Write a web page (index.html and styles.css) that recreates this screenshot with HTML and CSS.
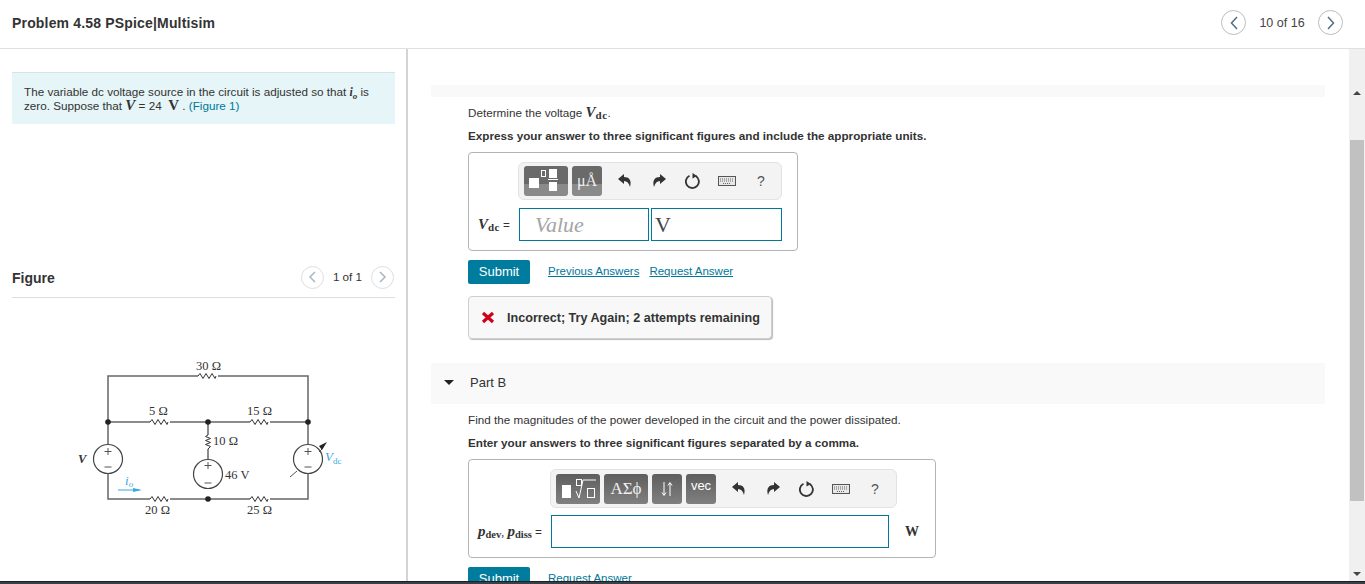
FILE: index.html
```html
<!DOCTYPE html>
<html lang="en">
<head>
<meta charset="utf-8">
<title>Problem 4.58 PSpice|Multisim</title>
<link rel="stylesheet" href="styles.css">
</head>
<body>
<div class="app">
  <header class="top">
    <h1 class="title">Problem 4.58 PSpice|Multisim</h1>
    <nav class="pager">
      <span class="circle"><svg width="10" height="14" viewBox="0 0 10 14"><path d="M8 1 2.500 7 8 13" class="chev"/></svg></span>
      <span class="pager-text">10 of 16</span>
      <span class="circle"><svg width="10" height="14" viewBox="0 0 10 14"><path d="M2 1 7.500 7 2 13" class="chev"/></svg></span>
    </nav>
  </header>
  <main class="main">
    <section class="left">
      <div class="intro">The variable dc voltage source in the circuit is adjusted so that <i class="m">i<sub>o</sub></i> is zero. Suppose that <i class="m big">V</i> = 24 &nbsp;<span class="m big upright">V</span> . <a class="fig">(Figure 1)</a></div>
      <div class="fig-head">
        <strong>Figure</strong>
        <div class="mini-pager">
          <span class="circle small"><svg width="9" height="12" viewBox="0 0 9 12"><path d="M7 1 2 6 7 11" class="chev dim"/></svg></span>
          <span class="mini-text">1 of 1</span>
          <span class="circle small"><svg width="9" height="12" viewBox="0 0 9 12"><path d="M2 1 7 6 2 11" class="chev dim"/></svg></span>
        </div>
      </div>
      <svg class="circuit" width="290" height="180" viewBox="70 350 290 180">
        <g class="wire">
          <path d="M108 445V377H198M218 377H308V445M108 475V500H150M170 500H250M270 500H308V475M108 423H150M170 423H250M270 423H308M208 423V436M208 450V460"/>
        </g>
        <g class="res">
          <path d="M198 377l2 -2.500 3 5 3 -5 3 5 3 -5 3 5 1 -2.500"/>
          <path d="M150 423l2 -2.500 3 5 3 -5 3 5 3 -5 3 5 1 -2.500"/>
          <path d="M250 423l2 -2.500 3 5 3 -5 3 5 3 -5 3 5 1 -2.500"/>
          <path d="M150 500l2 -2.500 3 5 3 -5 3 5 3 -5 3 5 1 -2.500"/>
          <path d="M250 500l2 -2.500 3 5 3 -5 3 5 3 -5 3 5 1 -2.500"/>
          <path d="M208 436l-2.500 1.500 5 2 -5 2 5 2 -5 2 5 2 -2.500 2.500"/>
        </g>
        <g class="src">
          <circle cx="108" cy="460" r="14.500"/>
          <circle cx="208" cy="475" r="14.500"/>
          <circle cx="308" cy="460" r="14.500"/>
          <path d="M108 449v7M104.500 452.500h7M104.500 468h7M208 463v7M204.500 466.500h7M204.500 484h7M308 449v7M304.500 452.500h7M304.500 468h7"/>
          <path d="M290 478 297 472M319 453 322 450"/>
        </g>
        <path class="tip" d="M327 443 319 447 322 451Z"/>
        <circle class="dot" cx="108" cy="423" r="2.800"/>
        <circle class="dot" cx="208" cy="423" r="2.800"/>
        <circle class="dot" cx="308" cy="423" r="2.800"/>
        <circle class="dot" cx="208" cy="500" r="2.800"/>
        <path class="io" d="M118 491H139"/>
        <path class="io-tip" d="M133 489 142 491 133 493Z"/>
        <text class="lab" x="196" y="371">30 Ω</text>
        <text class="lab" x="149" y="416">5 Ω</text>
        <text class="lab" x="247" y="416">15 Ω</text>
        <text class="lab" x="213" y="446">10 Ω</text>
        <text class="lab" x="225" y="480">46 V</text>
        <text class="lab" x="145" y="515">20 Ω</text>
        <text class="lab" x="247" y="515">25 Ω</text>
        <text class="lab it" x="78" y="464">V</text>
        <text class="lab it blue" x="125" y="486">i<tspan class="sb" dy="2">o</tspan></text>
        <text class="lab it blue" x="325" y="462">V<tspan class="sb up" dy="3">dc</tspan></text>
      </svg>
    </section>
    <section class="right">
      <div class="strip"></div>
      <div class="part">
        <p class="p first">Determine the voltage <i class="m big">V</i><b class="m sub">dc</b>.</p>
        <p class="p b">Express your answer to three significant figures and include the appropriate units.</p>
        <div class="box box-a">
          <div class="toolbar t-a">
            <span class="btn w44"><svg width="44" height="30" viewBox="0 0 44 30"><rect x="5" y="12" width="10" height="10" fill="#fff"/><rect x="17.500" y="4.500" width="4" height="6" fill="none" stroke="#fff"/><rect x="25" y="3" width="8" height="9" fill="#fff"/><path d="M24 13.500h10" stroke="#fff"/><rect x="25" y="16" width="8" height="9" fill="#fff"/></svg></span>
            <span class="btn w30 serif">μÅ</span>
            <span class="tool"><svg width="16" height="16" viewBox="0 0 16 16"><path class="ic" d="M1 6 7 1V4C12 4 15 7 13 14 12 10 10 8 7 8V11Z"/></svg></span>
            <span class="tool"><svg width="16" height="16" viewBox="0 0 16 16"><path class="ic" d="M15 6 9 1V4C4 4 1 7 3 14 4 10 6 8 9 8V11Z"/></svg></span>
            <span class="tool"><svg width="16" height="16" viewBox="0 0 16 16"><path class="ring" d="M10.800 3A6.500 6.500 0 1 1 4.500 2.700"/><path class="ic" d="M7.500 0 12 3 7.500 5.500Z"/></svg></span>
            <span class="tool"><svg width="18" height="10" viewBox="0 0 18 10"><rect class="kb" x=".5" y=".5" width="17" height="9"/><path class="keys" d="M2 3h14M2 5h14M5 7.500h8"/></svg></span>
            <span class="tool q">?</span>
          </div>
          <div class="row-a">
            <span class="var"><i class="m big">V</i><b class="m sub">dc</b> =</span>
            <span class="input value">Value</span>
            <span class="input unit">V</span>
          </div>
        </div>
        <div class="actions">
          <a class="submit">Submit</a>
          <a class="link l1">Previous Answers</a>
          <a class="link">Request Answer</a>
        </div>
        <div class="feedback">
          <svg width="14" height="13" viewBox="0 0 14 13"><path d="M2 2 12 11M12 2 2 11" stroke="#d0021b" stroke-width="3.200"/></svg>
          <span>Incorrect; Try Again; 2 attempts remaining</span>
        </div>
      </div>
      <div class="part-head"><span class="tri"></span>Part B</div>
      <div class="part">
        <p class="p first">Find the magnitudes of the power developed in the circuit and the power dissipated.</p>
        <p class="p b">Enter your answers to three significant figures separated by a comma.</p>
        <div class="box box-b">
          <div class="toolbar t-b">
            <span class="btn w44"><svg width="44" height="30" viewBox="0 0 44 30"><rect x="6" y="11" width="9" height="13" fill="#fff"/><rect x="20.500" y="5.500" width="5" height="6" fill="none" stroke="#fff"/><path d="M20 17 23 24 27 6H40" fill="none" stroke="#fff"/><rect x="31.500" y="14.500" width="7" height="9" fill="none" stroke="#fff"/></svg></span>
            <span class="btn w44 serif greek">ΑΣϕ</span>
            <span class="btn w30"><svg width="14" height="16" viewBox="0 0 14 16"><path d="M4 1V14M2 11.500 4 14.500 6 11.500M10 15V2M8 4.500 10 1.500 12 4.500" fill="none" stroke="#fff"/></svg></span>
            <span class="btn w30 vec">vec</span>
            <span class="tool"><svg width="16" height="16" viewBox="0 0 16 16"><path class="ic" d="M1 6 7 1V4C12 4 15 7 13 14 12 10 10 8 7 8V11Z"/></svg></span>
            <span class="tool"><svg width="16" height="16" viewBox="0 0 16 16"><path class="ic" d="M15 6 9 1V4C4 4 1 7 3 14 4 10 6 8 9 8V11Z"/></svg></span>
            <span class="tool"><svg width="16" height="16" viewBox="0 0 16 16"><path class="ring" d="M10.800 3A6.500 6.500 0 1 1 4.500 2.700"/><path class="ic" d="M7.500 0 12 3 7.500 5.500Z"/></svg></span>
            <span class="tool"><svg width="18" height="10" viewBox="0 0 18 10"><rect class="kb" x=".5" y=".5" width="17" height="9"/><path class="keys" d="M2 3h14M2 5h14M5 7.500h8"/></svg></span>
            <span class="tool q">?</span>
          </div>
          <div class="row-b">
            <span class="var vb"><i class="m pv">p</i><b class="m sub">dev</b><span class="m">,</span> <i class="m pv">p</i><b class="m sub">diss</b> =</span>
            <span class="input wide"></span>
            <span class="w-unit">W</span>
          </div>
        </div>
        <div class="actions">
          <a class="submit">Submit</a>
          <a class="link l1b">Request Answer</a>
        </div>
      </div>
    </section>
    <div class="scroll">
      <span class="arr up-arr"></span>
      <span class="thumb"></span>
      <span class="arr down-arr"></span>
    </div>
  </main>
  <div class="bottom"></div>
</div>
</body>
</html>
```
FILE: styles.css
```css
* { box-sizing: border-box; }
html, body { margin: 0; height: 100%; overflow: hidden; background: #fff; }
body { font: 11.700px/14px "Liberation Sans", Arial, sans-serif; color: #333; }
.app { height: 584px; display: flex; flex-direction: column; }
.top { height: 49px; flex: none; display: flex; align-items: center; justify-content: space-between; padding: 0 22px 3px 12px; border-bottom: 1px solid #e0e0e0; }
.title { margin: 0; font-size: 14px; letter-spacing: .17px; font-weight: bold; color: #333; }
.pager { display: flex; align-items: center; }
.circle { width: 25px; height: 25px; border: 1px solid #bdbdbd; border-radius: 50%; display: flex; align-items: center; justify-content: center; }
.circle.small { width: 23px; height: 23px; border-color: #dedede; }
.pager-text { width: 72px; text-align: center; color: #444; font-size: 12.500px; }
.chev { fill: none; stroke: #4f6f86; stroke-width: 1.500; }
.chev.dim { stroke: #a9b6c0; }
.main { flex: 1; min-height: 0; display: flex; }
.left { width: 408px; flex: none; padding: 23px 11px 0 12px; border-right: 2px solid #d4d4d4; overflow: hidden; }
.intro { height: 52px; padding: 12px 12px 0; background: #e6f5f7; border-top: 1px solid #d8e2e4; }
.m { font-family: "Liberation Serif", serif; line-height: 0; }
.big { font-size: 15px; font-weight: bold; }
.upright { font-style: normal; }
.intro i.m { font-weight: bold; }
sub { font-size: 9px; line-height: 0; }
.fig { color: #00789b; }
.fig-head { height: 37px; margin-top: 137px; padding: 3px 0 5px; display: flex; align-items: center; justify-content: space-between; border-bottom: 1px solid #dedede; font-size: 14px; }
.fig-head strong { color: #333; }
.mini-pager { display: flex; align-items: center; margin: -2px 1px 0 0; }
.mini-text { width: 47px; text-align: center; font-size: 11.700px; }
.circuit { display: block; margin: 51px 0 0 58px; }
.wire path { fill: none; stroke: #666; stroke-width: 1.500; }
.res path { fill: none; stroke: #333; stroke-width: 1; }
.src circle { fill: #fff; stroke: #444; stroke-width: 1.200; }
.src path { fill: none; stroke: #555; stroke-width: 1; }
.tip { fill: #222; }
.dot { fill: #222; }
.io { stroke: #36a9e1; stroke-width: 1; }
.io-tip { fill: #36a9e1; }
.lab { font: 12.500px "Liberation Serif", serif; fill: #333; }
.lab.it { font-style: italic; font-weight: bold; }
.lab.blue { fill: #36a9e1; font-weight: normal; font-size: 13px; }
.sb { font-size: 9px; font-style: italic; }
.sb.up { font-style: normal; }
.right { flex: 1; min-width: 0; padding: 36px 24px 0 23px; overflow: hidden; }
.strip { height: 12px; background: #f9f9f9; }
.part { padding-left: 37px; }
.p { margin: 7px 0 0; line-height: 16px; }
.p.first { margin-top: 8px; }
.p.b { font-weight: bold; color: #333; }
.sub { font-size: 11px; letter-spacing: .4px; vertical-align: -2px; }
.vb .sub { font-size: 10.500px; letter-spacing: 0; }
.box { margin-top: 8px; border: 1px solid #b4b4b4; border-radius: 4px; height: 99px; padding-top: 9px; }
.box-a { width: 330px; }
.box-b { width: 468px; }
.toolbar { display: flex; align-items: center; background: #f3f3f3; border: 1px solid #e2e2e2; border-radius: 6px; padding-left: 5px; }
.t-a { width: 264px; height: 38px; margin-left: 49px; }
.t-b { width: 347px; height: 39px; margin-left: 81px; }
.btn { height: 30px; margin-right: 4px; border-radius: 3px; background: linear-gradient(#6a6a6a 0 60%, #8a8a8a 60%); color: #fff; display: flex; align-items: center; justify-content: center; flex: none; overflow: hidden; }
.t-b .btn { background: linear-gradient(#5e5e5e, #808080); }
.w44 { width: 44px; }
.w30 { width: 30px; }
.serif { font: 16px "Liberation Serif", serif; color: #f0f0f0; }
.greek { font-size: 17px; }
.vec { font-size: 13px; padding-bottom: 5px; }
.btn + .tool { margin-left: 2px; }
.tool { width: 34px; flex: none; display: flex; align-items: center; justify-content: center; }
.q { font-size: 14px; color: #555; }
.ic { fill: #333; }
.ring { fill: none; stroke: #333; stroke-width: 1.800; }
.kb { fill: #e8e8e8; stroke: #555; }
.keys { stroke: #666; stroke-dasharray: 1 1; fill: none; }
.row-a { display: flex; align-items: center; margin-top: 8px; height: 33px; padding-left: 9px; }
.row-b { display: flex; align-items: center; margin-top: 7px; height: 33px; padding-left: 9px; }
.var { width: 41px; flex: none; white-space: nowrap; }
.vb { width: 73px; }
.pv { font-size: 15px; font-weight: bold; }
.input { height: 33px; border: 1px solid #00789b; background: #fff; display: flex; align-items: center; font-family: "Liberation Serif", serif; font-size: 22px; flex: none; }
.value { width: 130px; padding-left: 15px; font-style: italic; color: #a5a5a5; margin-right: 2px; }
.unit { width: 131px; padding-left: 3px; color: #444; }
.wide { width: 338px; }
.w-unit { margin-left: 16px; font: bold 14px "Liberation Serif", serif; color: #333; }
.actions { margin-top: 9px; display: flex; align-items: center; height: 24px; flex: none; }
.submit { width: 62px; height: 24px; background: #007c9e; color: #fff; border-radius: 2px; display: flex; align-items: center; justify-content: center; font-size: 13px; padding-bottom: 1px; }
.link { color: #00789b; font-size: 11.500px; text-decoration: underline; margin-left: 10px; padding-bottom: 2px; }
.l1, .l1b { margin-left: 18px; }
.feedback { margin-top: 12px; width: 304px; height: 43px; background: #f8f8f8; border: 1px solid #cfcfcf; border-radius: 4px; box-shadow: 1px 1px 1px #bbb; display: flex; align-items: center; gap: 12px; padding-left: 12px; font-size: 12.600px; font-weight: bold; color: #333; }
.part-head { margin-top: 24px; height: 41px; background: #f9f9f9; display: flex; align-items: center; font-size: 13px; padding: 0 0 2px 13px; color: #333; }
.tri { width: 0; height: 0; border: 5px solid transparent; border-top: 5px solid #222; border-bottom: 0; margin-right: 16px; }
.scroll { width: 16px; flex: none; background: #f0f0f0; display: flex; flex-direction: column; align-items: center; padding: 42px 0 5px; }
.arr { width: 0; height: 0; border: 4px solid transparent; flex: none; }
.up-arr { border-bottom: 4px solid #444; border-top: 0; }
.down-arr { border-top: 4px solid #444; border-bottom: 0; margin-top: auto; }
.thumb { width: 14px; height: 361px; margin-top: 45px; background: #c1c1c1; flex: none; }
.bottom { height: 3px; flex: none; background: #3a3f44; border-top: 1px solid #1c2024; }
```
